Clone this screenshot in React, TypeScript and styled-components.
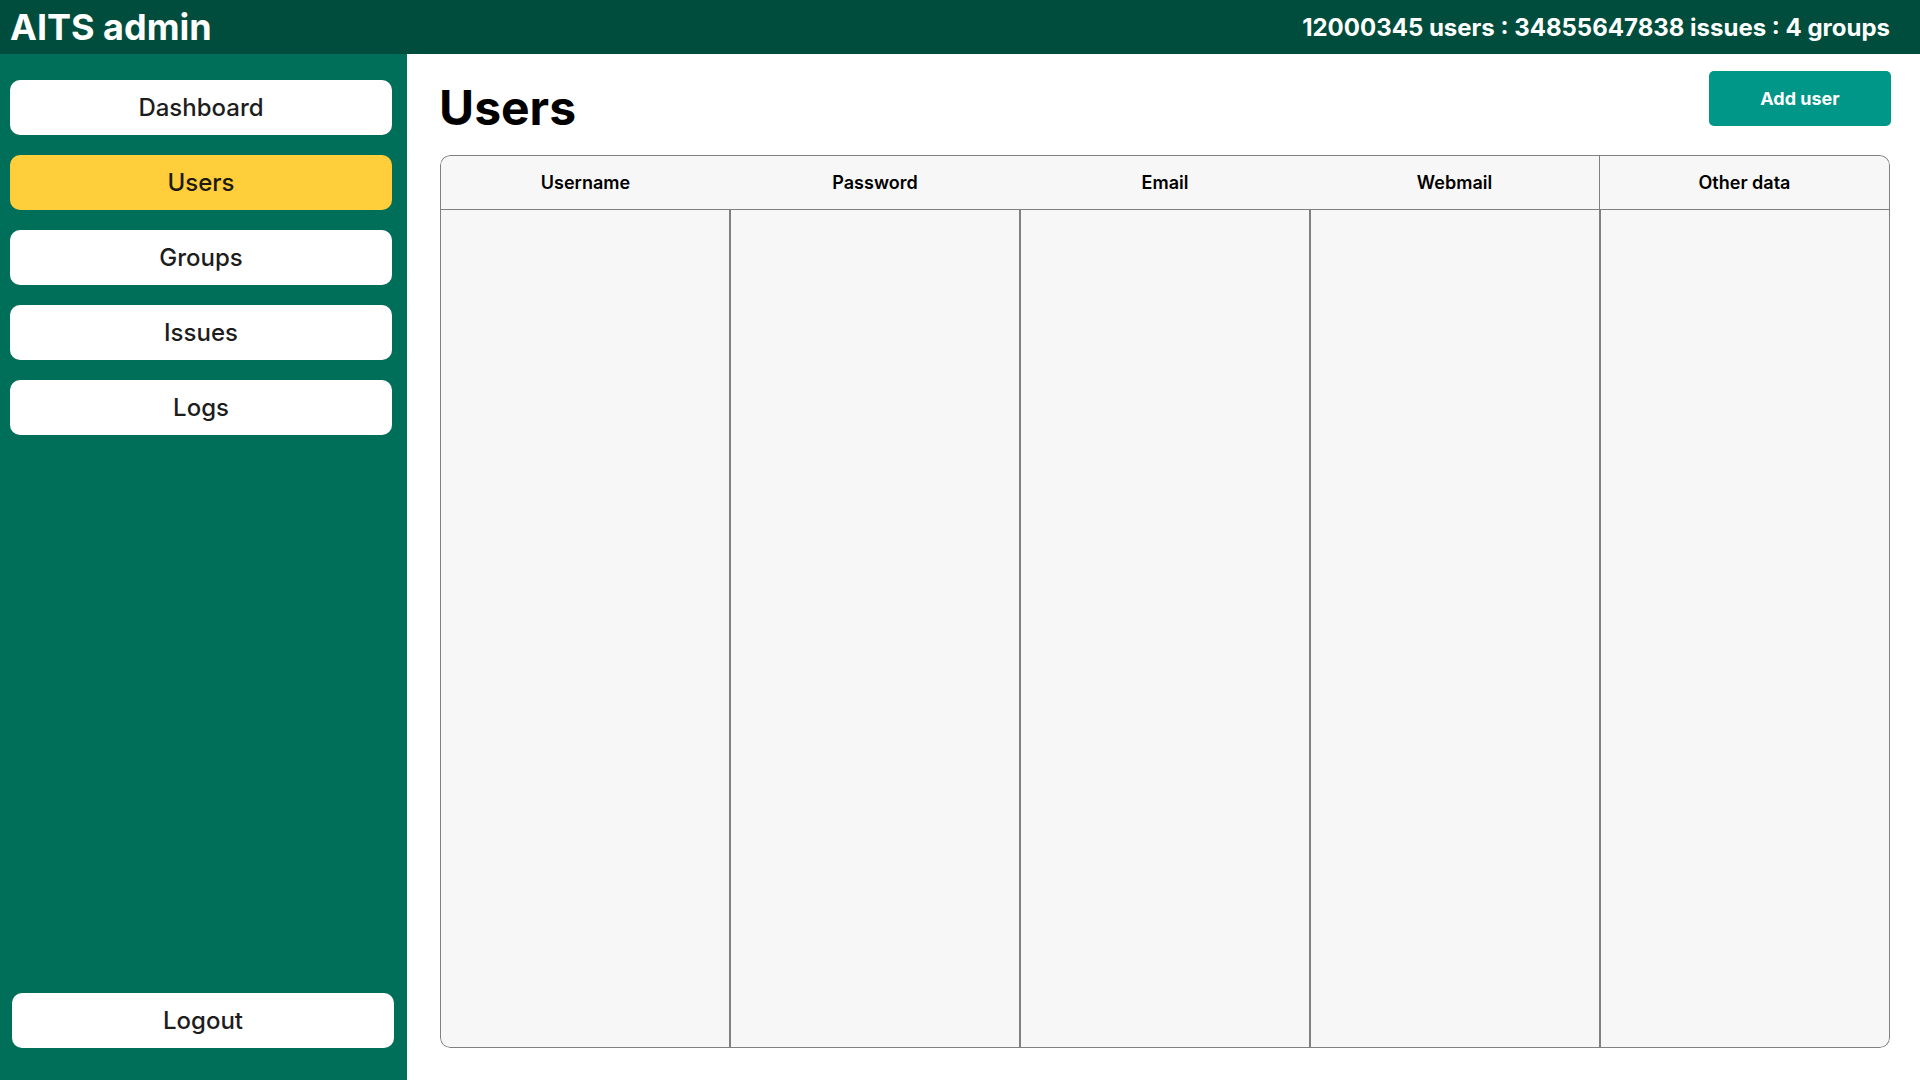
import React, { useState } from 'react';
import styled, { createGlobalStyle } from 'styled-components';

const GlobalStyle = createGlobalStyle`
  *, *::before, *::after { box-sizing: border-box; }
  body {
    margin: 0;
    background: #ffffff;
    color: #000000;
    font-family: Inter, "Liberation Sans", sans-serif;
  }
  button { font-family: inherit; cursor: pointer; }
`;

const Page = styled.div`
  display: flex;
  flex-direction: column;
  min-height: 100vh;
`;

const TopBar = styled.header`
  display: flex;
  align-items: center;
  justify-content: space-between;
  min-height: 54px;
  padding: 0 30px 0 10px;
  background: #004d3d;
  color: #ffffff;
`;

const Brand = styled.div`
  font-size: 36px;
  line-height: 44px;
  font-weight: 700;
`;

const Stats = styled.div`
  padding-top: 2px;
  font-size: 24px;
  line-height: 30px;
  font-weight: 700;
`;

const Body = styled.div`
  display: flex;
  flex: 1;
`;

const Sidebar = styled.nav`
  display: flex;
  flex-direction: column;
  justify-content: space-between;
  flex: 0 0 407px;
  padding: 26px 15px 32px 10px;
  background: #006f59;
`;

const NavList = styled.div`
  display: flex;
  flex-direction: column;
  gap: 20px;
`;

const SidebarFooter = styled.div`
  display: flex;
  flex-direction: column;
  margin: 0 -2px 0 2px;
`;

const NavButton = styled.button<{ $active?: boolean }>`
  height: 55px;
  padding: 0 16px;
  border: 0;
  border-radius: 10px;
  background: ${({ $active }) => ($active ? '#ffce3a' : '#ffffff')};
  color: ${({ $active }) => ($active ? '#1c1a10' : '#1d1d1d')};
  font-size: 24px;
  line-height: 30px;
  font-weight: 500;
`;

const Main = styled.main`
  display: flex;
  flex-direction: column;
  flex: 1;
  min-width: 0;
  padding: 17px 30px 32px 33px;
`;

const TitleRow = styled.div`
  display: flex;
  align-items: flex-start;
  justify-content: space-between;
  height: 84px;
  margin: 0 -1px;
`;

const Title = styled.h1`
  margin: 7px 0 0;
  font-size: 48px;
  line-height: 60px;
  font-weight: 700;
`;

const AddButton = styled.button`
  width: 182px;
  height: 55px;
  border: 0;
  border-radius: 5px;
  background: #009688;
  color: #ffffff;
  font-size: 18px;
  line-height: 22px;
  font-weight: 700;
`;

const line = '1px solid #808080';

const Frame = styled.div`
  display: flex;
  flex: 1;
`;

const Table = styled.table`
  width: 100%;
  table-layout: fixed;
  border-collapse: separate;
  border-spacing: 0;
  border-radius: 10px;
  overflow: hidden;
  background: #f7f7f7;
`;

const HeadCell = styled.th`
  height: 55px;
  padding: 0 12px;
  border-top: ${line};
  border-bottom: ${line};
  font-size: 18px;
  line-height: 22px;
  font-weight: 600;

  &:first-child { border-left: ${line}; border-top-left-radius: 10px; }
  &:nth-last-child(2) { border-right: ${line}; }
  &:last-child { border-right: ${line}; border-top-right-radius: 10px; }
`;

const Cell = styled.td`
  padding: 0;
  border-left: ${line};
  border-right: ${line};
  border-bottom: ${line};

  &:first-child { border-bottom-left-radius: 10px; }
  &:last-child { border-bottom-right-radius: 10px; }
`;

const sections = ['Dashboard', 'Users', 'Groups', 'Issues', 'Logs'];
const columns = ['Username', 'Password', 'Email', 'Webmail', 'Other data'];

export default function App() {
  const [section, setSection] = useState('Users');

  return (
    <Page>
      <GlobalStyle />
      <TopBar>
        <Brand>AITS admin</Brand>
        <Stats>12000345 users : 34855647838 issues : 4 groups</Stats>
      </TopBar>
      <Body>
        <Sidebar>
          <NavList>
            {sections.map((name) => (
              <NavButton
                key={name}
                type="button"
                $active={name === section}
                aria-current={name === section ? 'page' : undefined}
                onClick={() => setSection(name)}
              >
                {name}
              </NavButton>
            ))}
          </NavList>
          <SidebarFooter>
            <NavButton type="button">Logout</NavButton>
          </SidebarFooter>
        </Sidebar>
        <Main>
          <TitleRow>
            <Title>{section}</Title>
            <AddButton type="button">Add user</AddButton>
          </TitleRow>
          <Frame>
            <Table>
              <thead>
                <tr>
                  {columns.map((name) => (
                    <HeadCell key={name} scope="col">{name}</HeadCell>
                  ))}
                </tr>
              </thead>
              <tbody>
                <tr>
                  {columns.map((name) => (
                    <Cell key={name} />
                  ))}
                </tr>
              </tbody>
            </Table>
          </Frame>
        </Main>
      </Body>
    </Page>
  );
}
